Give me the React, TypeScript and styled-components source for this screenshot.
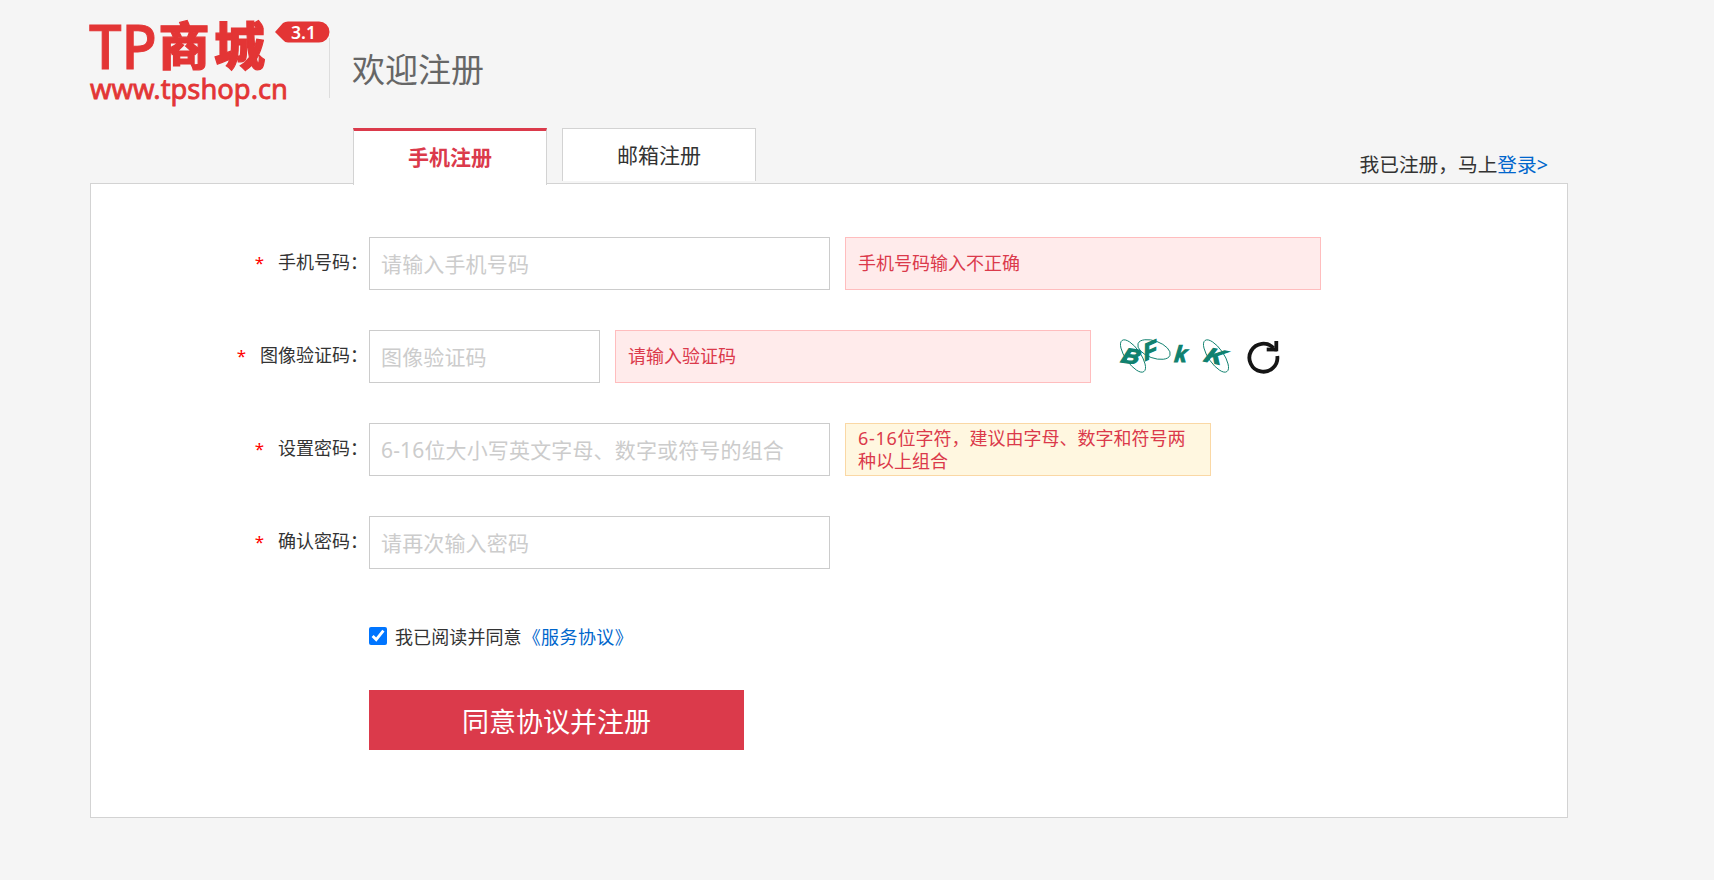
import React from "react";
import styled, { createGlobalStyle } from "styled-components";

const GlobalStyle = createGlobalStyle`
  * { box-sizing: border-box; }
  body {
    margin: 0;
    background: #f5f5f5;
    color: #333;
    font-family: "Noto Sans", "Noto Sans CJK SC", sans-serif;
    font-size: 18px;
    line-height: 24px;
  }
  #root { min-height: 100vh; }
`;

const Page = styled.div`
  width: 1568px;
  padding: 18px 0 62px 90px;
`;

const Header = styled.header`
  display: flex;
  height: 110px;
`;

const LogoSvg = styled.svg`
  display: block;
  width: 239px;
  height: 92px;
  overflow: visible;
`;

const Divider = styled.div`
  width: 1px;
  height: 60px;
  margin-top: 20px;
  background: #ddd;
`;

const Title = styled.h1`
  margin: 28px 0 0 22px;
  font-size: 33px;
  font-weight: 400;
  line-height: 48px;
  color: #666;
`;

const TabRow = styled.nav`
  display: flex;
  height: 55px;
  padding-left: 263px;
`;

const Tab = styled.a<{ $active?: boolean }>`
  position: relative;
  width: 194px;
  height: ${(p) => (p.$active ? 57 : 53)}px;
  margin-right: 15px;
  border: 1px solid #d3d3d3;
  border-top: ${(p) => (p.$active ? "3px solid #db3a4b" : "1px solid #d3d3d3")};
  border-bottom: 0;
  background: #fff;
  color: ${(p) => (p.$active ? "#db3a4b" : "#333")};
  font-size: 21px;
  font-weight: ${(p) => (p.$active ? 700 : 400)};
  line-height: 52px;
  text-align: center;
`;

const LoginHint = styled.p`
  margin: 23px 20px 0 auto;
  font-size: 19.7px;
  line-height: 28px;
`;

const Link = styled.a`
  color: #0066cc;
`;

const Panel = styled.form`
  height: 635px;
  padding-top: 53px;
  border: 1px solid #d3d3d3;
  background: #fff;
`;

const Row = styled.div`
  display: flex;
  height: 53px;
  margin-bottom: 40px;
`;

const Label = styled.label`
  width: 278px;
  padding-right: 1px;
  line-height: 51px;
  text-align: right;
  white-space: nowrap;
`;

const Star = styled.span`
  margin-right: 14px;
  color: #f00;
  font-size: 17px;
`;

const Field = styled.input<{ $width?: number }>`
  width: ${(p) => p.$width ?? 461}px;
  height: 53px;
  padding: 0 11px;
  border: 1px solid #ccc;
  border-radius: 0;
  background: #fff;
  font: 400 21px "Noto Sans", "Noto Sans CJK SC", sans-serif;
  outline: none;
  &::placeholder {
    color: #ccc;
    opacity: 1;
    letter-spacing: 0.15px;
  }
`;

const Message = styled.div<{ $hint?: boolean }>`
  width: ${(p) => (p.$hint ? 366 : 476)}px;
  height: 53px;
  margin-left: 15px;
  padding: ${(p) => (p.$hint ? "3px 12px" : "0 12px")};
  border: 1px solid ${(p) => (p.$hint ? "#fad8a5" : "#ffbdbe")};
  background: ${(p) => (p.$hint ? "#fff7e0" : "#ffebeb")};
  color: #db3a4b;
  line-height: ${(p) => (p.$hint ? "22.5px" : "51px")};
`;

const Digits = styled.span`
  letter-spacing: 0.7px;
`;

const CaptchaSvg = styled.svg`
  width: 120px;
  height: 45px;
  margin: 4px 0 0 24px;
`;

const RefreshSvg = styled.svg`
  width: 34px;
  height: 36px;
  margin: 10px 0 0 10.5px;
`;

const Agreement = styled.label`
  display: flex;
  align-items: center;
  height: 26px;
  margin: 54px 0 0 278px;
`;

const Checkbox = styled.input`
  width: 18px;
  height: 18px;
  margin: 0 8px 0 0;
  accent-color: #0075ff;
`;

const AgreementText = styled.span`
  padding-top: 1px;
  letter-spacing: 0.1px;
`;

const AgreementLink = styled(Link)`
  margin-left: 1px;
  letter-spacing: 0.4px;
`;

const Submit = styled.button`
  display: block;
  width: 375px;
  height: 60px;
  margin: 41px 0 0 278px;
  padding: 0;
  border: 0;
  background: #db3a4b;
  color: #fff;
  font: 400 27px "Noto Sans", "Noto Sans CJK SC", sans-serif;
`;

const Form = styled.div`
  height: 332px;
`;

const Logo = () => (
  <LogoSvg viewBox="0 0 239 92" fill="#e33535" fontFamily='"Noto Sans", "Noto Sans CJK SC", sans-serif'>
    <text x="-1" y="51" fontSize="62" fontWeight="500" textLength="68" lengthAdjust="spacingAndGlyphs" stroke="#e33535" strokeWidth="1">TP</text>
    <g fontSize="51" fontWeight="900" fontFamily='"Noto Sans CJK SC", sans-serif' stroke="#e33535" strokeWidth="1.2">
      <text x="68.500" y="46.500">商</text>
      <text x="124" y="46.500">城</text>
    </g>
    <text x="0" y="81" fontSize="28" fontWeight="400" textLength="198" lengthAdjust="spacingAndGlyphs" stroke="#e33535" strokeWidth="0.8">www.tpshop.cn</text>
    <path d="M185 14 L193 5 Q195 3.500 198 3.500 H229 A10.500 10.500 0 0 1 229 24.500 H198 Q195 24.500 193 22 Z" />
    <text x="201" y="21" fontSize="18.500" fontWeight="600" fill="#fff" textLength="25" lengthAdjust="spacingAndGlyphs">3.1</text>
  </LogoSvg>
);

const Captcha = () => (
  <CaptchaSvg viewBox="0 0 120 45" fill="#10816f" fontFamily='"Liberation Sans", sans-serif' fontWeight="700" fontStyle="italic">
    <g fill="none" stroke="#10816f" strokeWidth="0.9">
      <ellipse cx="18" cy="22" rx="19" ry="7.500" transform="rotate(55 18 22)" />
      <ellipse cx="39" cy="15.500" rx="17" ry="8.500" transform="rotate(20 39 15.500)" />
      <ellipse cx="101" cy="22" rx="19" ry="7.500" transform="rotate(55 101 22)" />
    </g>
    <g stroke="#10816f" strokeWidth="1.2">
      <text fontSize="21" transform="translate(5 28) rotate(8) skewX(-13) scale(1.15 1)">B</text>
      <text fontSize="23" transform="translate(30 27) rotate(-10) skewY(-14)">F</text>
      <text fontSize="23" transform="translate(59 27.500) skewX(-6) scale(.95 1)">k</text>
      <text fontSize="21" transform="translate(88 27) rotate(12) skewX(-14) scale(1.2 1)">K</text>
    </g>
  </CaptchaSvg>
);

const Refresh = () => (
  <RefreshSvg viewBox="0 0 34 36" fill="none" stroke="#151515" strokeWidth="3.800">
    <path d="M27.500 8 A14 14 0 1 0 31.300 16" />
    <path d="M20.700 9.500 H31" />
    <path d="M30.300 1 V11.300" />
  </RefreshSvg>
);

export default function App() {
  return (
    <>
      <GlobalStyle />
      <Page>
        <Header>
          <Logo />
          <Divider />
          <Title>欢迎注册</Title>
        </Header>
        <TabRow>
          <Tab $active>手机注册</Tab>
          <Tab>邮箱注册</Tab>
          <LoginHint>我已注册，马上<Link>登录&gt;</Link></LoginHint>
        </TabRow>
        <Panel>
          <Form>
            <Row>
              <Label><Star>*</Star>手机号码：</Label>
              <Field placeholder="请输入手机号码" />
              <Message>手机号码输入不正确</Message>
            </Row>
            <Row>
              <Label><Star>*</Star>图像验证码：</Label>
              <Field $width={231} placeholder="图像验证码" />
              <Message>请输入验证码</Message>
              <Captcha />
              <Refresh />
            </Row>
            <Row>
              <Label><Star>*</Star>设置密码：</Label>
              <Field placeholder="6-16位大小写英文字母、数字或符号的组合" />
              <Message $hint><Digits>6-16</Digits>位字符，建议由字母、数字和符号两种以上组合</Message>
            </Row>
            <Row>
              <Label><Star>*</Star>确认密码：</Label>
              <Field placeholder="请再次输入密码" />
            </Row>
          </Form>
          <Agreement>
            <Checkbox type="checkbox" defaultChecked />
            <AgreementText>
              我已阅读并同意<AgreementLink>《服务协议》</AgreementLink>
            </AgreementText>
          </Agreement>
          <Submit type="button">同意协议并注册</Submit>
        </Panel>
      </Page>
    </>
  );
}
